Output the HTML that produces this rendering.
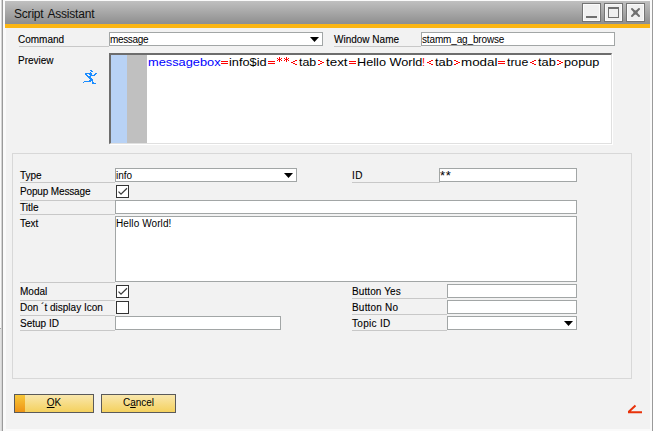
<!DOCTYPE html>
<html><head><meta charset="utf-8">
<style>
html,body{margin:0;padding:0;}
body{width:653px;height:431px;position:relative;overflow:hidden;background:#f4f4f4;font-family:"Liberation Sans",sans-serif;font-size:10px;color:#000;}
.a{position:absolute;}
.lbl{position:absolute;font-size:10px;line-height:12px;margin:1px 0 0 -1px;white-space:nowrap;color:#000;-webkit-text-stroke:0.1px #000;}
.ul{position:absolute;height:1px;background:#c8c8c8;}
.inp{position:absolute;box-sizing:border-box;background:#fff;border:1px solid #a2a6a6;}
.txt{position:absolute;font-size:10px;line-height:12px;white-space:nowrap;margin-top:1px;}
.pv{position:absolute;top:52px;font-size:11px;line-height:20px;white-space:pre;transform-origin:0 0;}
.chk{position:absolute;box-sizing:border-box;width:13px;height:13px;border:1px solid #333;background:#fff;}
.tbtn{position:absolute;top:3px;width:19px;height:19px;box-sizing:border-box;border:1px solid #747474;box-shadow:inset 0 0 0 1px #fbfbfb;background:#f0f0f0;}
</style></head><body>
<!-- window frame -->
<div class="a" style="left:0;top:0;width:653px;height:431px;background:#fafafa;"></div>
<div class="a" style="left:0;top:328px;width:1px;height:103px;background:#e2e2e2;"></div><div class="a" style="left:0;top:328px;width:1px;height:1px;background:#a8a8a8;"></div><div class="a" style="left:1px;top:0;width:1px;height:431px;background:#d4d4d4;"></div><div class="a" style="left:2px;top:0;width:1px;height:431px;background:#9a9a9a;"></div>
<div class="a" style="left:652px;top:0;width:1px;height:431px;background:#9a9a9a;"></div>
<div class="a" style="left:6px;top:28px;width:644px;height:401px;background:#f2f2f2;"></div>
<!-- title bar -->
<div class="a" style="left:5px;top:1px;width:645px;height:23px;background:linear-gradient(#c0c0c0,#8e8e8e);"></div>
<div class="a" style="left:5px;top:23px;width:645px;height:1px;background:#8c9096;"></div>
<div class="a" style="left:5px;top:24px;width:645px;height:4px;background:#fbb614;"></div>
<div class="a" style="left:14px;top:6px;font-size:12px;letter-spacing:-0.2px;word-spacing:1.5px;line-height:17px;color:#111;">Script Assistant</div>
<div class="tbtn" style="left:582px;"><div class="a" style="left:3px;top:12px;width:11px;height:2px;background:#707070;"></div></div>
<div class="tbtn" style="left:604px;"><div class="a" style="left:3px;top:3px;width:11px;height:11px;box-sizing:border-box;border:1px solid #707070;border-top-width:2px;"></div></div>
<div class="tbtn" style="left:626px;"><svg class="a" style="left:3px;top:3px;" width="11" height="11" viewBox="0 0 11 11"><path d="M2 2L9 9M9 2L2 9" stroke="#707070" stroke-width="2" stroke-linecap="round"/><rect x="3.5" y="3.5" width="4" height="4" fill="#707070"/></svg></div>

<!-- Command row -->
<div class="lbl" style="left:19px;top:33px;">Command</div>
<div class="ul" style="left:19px;top:46px;width:90px;"></div>
<div class="inp" style="left:109px;top:32px;width:214px;height:14px;"></div>
<div class="txt" style="left:110px;top:33px;letter-spacing:-0.35px;">message</div>
<svg class="a" style="left:310px;top:37px;" width="9" height="5"><path d="M0 0H9L4.5 5Z" fill="#000"/></svg>
<div class="lbl" style="left:335px;top:33px;">Window Name</div>
<div class="ul" style="left:334px;top:46px;width:87px;"></div>
<div class="inp" style="left:421px;top:32px;width:194px;height:14px;"></div>
<div class="txt" style="left:422px;top:33px;letter-spacing:-0.15px;">stamm_ag_browse</div>

<!-- Preview -->
<div class="lbl" style="left:19px;top:54px;">Preview</div>
<svg class="a" style="left:82px;top:68px;" width="16" height="17" shape-rendering="crispEdges"><g fill="#1a8cff"><rect x="8" y="2" width="2" height="1"/><rect x="9" y="3" width="2" height="1"/><rect x="8" y="4" width="1" height="1"/><rect x="3" y="5" width="7" height="1"/><rect x="13" y="5" width="2" height="1"/><rect x="3" y="6" width="2" height="1"/><rect x="7" y="6" width="3" height="1"/><rect x="12" y="6" width="2" height="1"/><rect x="4" y="7" width="2" height="1"/><rect x="8" y="7" width="5" height="1"/><rect x="5" y="8" width="4" height="1"/><rect x="6" y="9" width="3" height="1"/><rect x="7" y="10" width="3" height="1"/><rect x="8" y="11" width="3" height="1"/><rect x="7" y="12" width="4" height="1"/><rect x="2" y="13" width="7" height="1"/><rect x="10" y="13" width="1" height="1"/><rect x="1" y="14" width="1" height="1"/><rect x="10" y="14" width="2" height="1"/><rect x="10" y="15" width="4" height="1"/></g></svg>
<div class="a" style="left:109px;top:53px;width:503px;height:91px;box-sizing:border-box;background:#fff;border-top:2px solid #6d6d6d;border-left:2px solid #6d6d6d;border-right:1px solid #e0e0e0;border-bottom:1px solid #e0e0e0;box-shadow:1px 1px 0 #fff;"></div>
<div class="a" style="left:111px;top:55px;width:16px;height:88px;background:#b8d2f5;"></div>
<div class="a" style="left:127px;top:55px;width:20px;height:88px;background:#c0c0c0;"></div>
<span class="pv" style="left:147.6px;color:#0000ff;transform:scaleX(1.164);">messagebox</span>
<svg class="a" style="left:221px;top:61px;" width="7" height="3" shape-rendering="crispEdges"><g fill="#ff0000"><rect x="0" y="0" width="7" height="1"/><rect x="0" y="2" width="7" height="1"/></g></svg>
<span class="pv" style="left:228.5px;color:#000;transform:scaleX(1.161);">info$id</span>
<svg class="a" style="left:268px;top:61px;" width="7" height="3" shape-rendering="crispEdges"><g fill="#ff0000"><rect x="0" y="0" width="7" height="1"/><rect x="0" y="2" width="7" height="1"/></g></svg>
<svg class="a" style="left:277px;top:57px;" width="5" height="5" shape-rendering="crispEdges"><g fill="#ff0000"><rect x="2" y="0" width="1" height="5"/><rect x="0" y="1" width="1" height="1"/><rect x="4" y="1" width="1" height="1"/><rect x="1" y="2" width="3" height="1"/><rect x="0" y="3" width="1" height="1"/><rect x="4" y="3" width="1" height="1"/></g></svg>
<svg class="a" style="left:284px;top:57px;" width="5" height="5" shape-rendering="crispEdges"><g fill="#ff0000"><rect x="2" y="0" width="1" height="5"/><rect x="0" y="1" width="1" height="1"/><rect x="4" y="1" width="1" height="1"/><rect x="1" y="2" width="3" height="1"/><rect x="0" y="3" width="1" height="1"/><rect x="4" y="3" width="1" height="1"/></g></svg>
<svg class="a" style="left:291px;top:60px;" width="6" height="5" shape-rendering="crispEdges"><g fill="#ff0000"><rect x="4" y="0" width="2" height="1"/><rect x="2" y="1" width="2" height="1"/><rect x="0" y="2" width="2" height="1"/><rect x="2" y="3" width="2" height="1"/><rect x="4" y="4" width="2" height="1"/></g></svg>
<span class="pv" style="left:299.1px;color:#000;transform:scaleX(1.127);">tab</span>
<svg class="a" style="left:318px;top:60px;" width="6" height="5" shape-rendering="crispEdges"><g fill="#ff0000"><rect x="0" y="0" width="2" height="1"/><rect x="2" y="1" width="2" height="1"/><rect x="4" y="2" width="2" height="1"/><rect x="2" y="3" width="2" height="1"/><rect x="0" y="4" width="2" height="1"/></g></svg>
<span class="pv" style="left:326.0px;color:#000;transform:scaleX(1.217);">text</span>
<svg class="a" style="left:349px;top:61px;" width="7" height="3" shape-rendering="crispEdges"><g fill="#ff0000"><rect x="0" y="0" width="7" height="1"/><rect x="0" y="2" width="7" height="1"/></g></svg>
<span class="pv" style="left:356.9px;color:#000;transform:scaleX(1.155);">Hello World</span>
<span class="pv" style="left:422.0px;color:#ff0000;">!</span>
<svg class="a" style="left:427px;top:60px;" width="6" height="5" shape-rendering="crispEdges"><g fill="#ff0000"><rect x="4" y="0" width="2" height="1"/><rect x="2" y="1" width="2" height="1"/><rect x="0" y="2" width="2" height="1"/><rect x="2" y="3" width="2" height="1"/><rect x="4" y="4" width="2" height="1"/></g></svg>
<span class="pv" style="left:434.9px;color:#000;transform:scaleX(1.173);">tab</span>
<svg class="a" style="left:454px;top:60px;" width="6" height="5" shape-rendering="crispEdges"><g fill="#ff0000"><rect x="0" y="0" width="2" height="1"/><rect x="2" y="1" width="2" height="1"/><rect x="4" y="2" width="2" height="1"/><rect x="2" y="3" width="2" height="1"/><rect x="0" y="4" width="2" height="1"/></g></svg>
<span class="pv" style="left:461.3px;color:#000;transform:scaleX(1.218);">modal</span>
<svg class="a" style="left:498px;top:61px;" width="7" height="3" shape-rendering="crispEdges"><g fill="#ff0000"><rect x="0" y="0" width="7" height="1"/><rect x="0" y="2" width="7" height="1"/></g></svg>
<span class="pv" style="left:506.5px;color:#000;transform:scaleX(1.121);">true</span>
<svg class="a" style="left:530px;top:60px;" width="6" height="5" shape-rendering="crispEdges"><g fill="#ff0000"><rect x="4" y="0" width="2" height="1"/><rect x="2" y="1" width="2" height="1"/><rect x="0" y="2" width="2" height="1"/><rect x="2" y="3" width="2" height="1"/><rect x="4" y="4" width="2" height="1"/></g></svg>
<span class="pv" style="left:537.9px;color:#000;transform:scaleX(1.160);">tab</span>
<svg class="a" style="left:557px;top:60px;" width="6" height="5" shape-rendering="crispEdges"><g fill="#ff0000"><rect x="0" y="0" width="2" height="1"/><rect x="2" y="1" width="2" height="1"/><rect x="4" y="2" width="2" height="1"/><rect x="2" y="3" width="2" height="1"/><rect x="0" y="4" width="2" height="1"/></g></svg>
<span class="pv" style="left:564.3px;color:#000;transform:scaleX(1.155);">popup</span>


<!-- group box -->
<div class="a" style="left:12px;top:153px;width:620px;height:226px;box-sizing:border-box;border:1px solid #d8d8d8;"></div>

<!-- left column -->
<div class="lbl" style="left:21px;top:169px;">Type</div>
<div class="ul" style="left:20px;top:182px;width:95px;"></div>
<div class="inp" style="left:115px;top:168px;width:182px;height:14px;"></div>
<div class="txt" style="left:116px;top:169px;">info</div>
<svg class="a" style="left:284px;top:173px;" width="9" height="5"><path d="M0 0H9L4.5 5Z" fill="#000"/></svg>

<div class="lbl" style="left:21px;top:185px;letter-spacing:-0.15px;">Popup Message</div>
<div class="ul" style="left:20px;top:200px;width:95px;"></div>
<div class="chk" style="left:116px;top:185px;"><svg class="a" style="left:0px;top:0px;" width="11" height="11"><path d="M1.5 5.6L4 8.1L10 2.3" fill="none" stroke="#3c3c3c" stroke-width="1.3"/></svg></div>

<div class="lbl" style="left:21px;top:201px;">Title</div>
<div class="ul" style="left:20px;top:214px;width:95px;"></div>
<div class="inp" style="left:115px;top:200px;width:462px;height:14px;"></div>

<div class="lbl" style="left:21px;top:217px;">Text</div>
<div class="ul" style="left:20px;top:282px;width:95px;"></div>
<div class="inp" style="left:115px;top:216px;width:462px;height:66px;"></div>
<div class="txt" style="left:116px;top:217px;letter-spacing:0.1px;">Hello World!</div>

<div class="lbl" style="left:21px;top:285px;">Modal</div>
<div class="ul" style="left:20px;top:300px;width:95px;"></div>
<div class="chk" style="left:116px;top:285px;"><svg class="a" style="left:0px;top:0px;" width="11" height="11"><path d="M1.5 5.6L4 8.1L10 2.3" fill="none" stroke="#3c3c3c" stroke-width="1.3"/></svg></div>

<div class="lbl" style="left:21px;top:301px;">Don ´t display Icon</div>
<div class="ul" style="left:20px;top:315px;width:95px;"></div>
<div class="chk" style="left:116px;top:301px;"></div>

<div class="lbl" style="left:21px;top:317px;">Setup ID</div>
<div class="ul" style="left:20px;top:330px;width:95px;"></div>
<div class="inp" style="left:115px;top:316px;width:166px;height:14px;"></div>

<!-- right column -->
<div class="lbl" style="left:353px;top:169px;letter-spacing:0.5px;">ID</div>
<div class="ul" style="left:352px;top:182px;width:88px;"></div>
<div class="inp" style="left:439px;top:168px;width:138px;height:14px;"></div>
<div class="txt" style="left:440px;top:169px;font-size:13px;letter-spacing:0.6px;">**</div>

<div class="lbl" style="left:353px;top:285px;letter-spacing:0.1px;">Button Yes</div>
<div class="ul" style="left:352px;top:298px;width:95px;"></div>
<div class="inp" style="left:447px;top:284px;width:130px;height:14px;"></div>

<div class="lbl" style="left:353px;top:301px;letter-spacing:0.2px;">Button No</div>
<div class="ul" style="left:352px;top:314px;width:95px;"></div>
<div class="inp" style="left:447px;top:300px;width:130px;height:14px;"></div>

<div class="lbl" style="left:353px;top:317px;letter-spacing:0.3px;">Topic ID</div>
<div class="ul" style="left:352px;top:330px;width:95px;"></div>
<div class="inp" style="left:447px;top:316px;width:130px;height:14px;"></div>
<svg class="a" style="left:564px;top:321px;" width="9" height="5"><path d="M0 0H9L4.5 5Z" fill="#000"/></svg>

<!-- buttons -->
<div class="a" style="left:14px;top:394px;width:80px;height:19px;box-sizing:border-box;border:1px solid #5a5a5a;background:linear-gradient(#f9e7ad,#f4d15e);"></div>
<div class="a" style="left:15px;top:395px;width:10px;height:17px;background:linear-gradient(#f8c83a,#ee9416);"></div>
<div class="a" style="left:14px;top:397px;width:80px;text-align:center;font-size:10px;line-height:12px;"><u>O</u>K</div>
<div class="a" style="left:101px;top:394px;width:75px;height:19px;box-sizing:border-box;border:1px solid #5a5a5a;background:linear-gradient(#f9e7ad,#f4d15e);"></div>
<div class="a" style="left:101px;top:397px;width:75px;text-align:center;font-size:10px;line-height:12px;">C<u>a</u>ncel</div>

<!-- red icon -->
<svg class="a" style="left:626px;top:403px;" width="18" height="12"><path d="M2.5 9L9.5 2.5M2 9.2H16" stroke="#e8320a" stroke-width="2" fill="none"/></svg>
</body></html>
